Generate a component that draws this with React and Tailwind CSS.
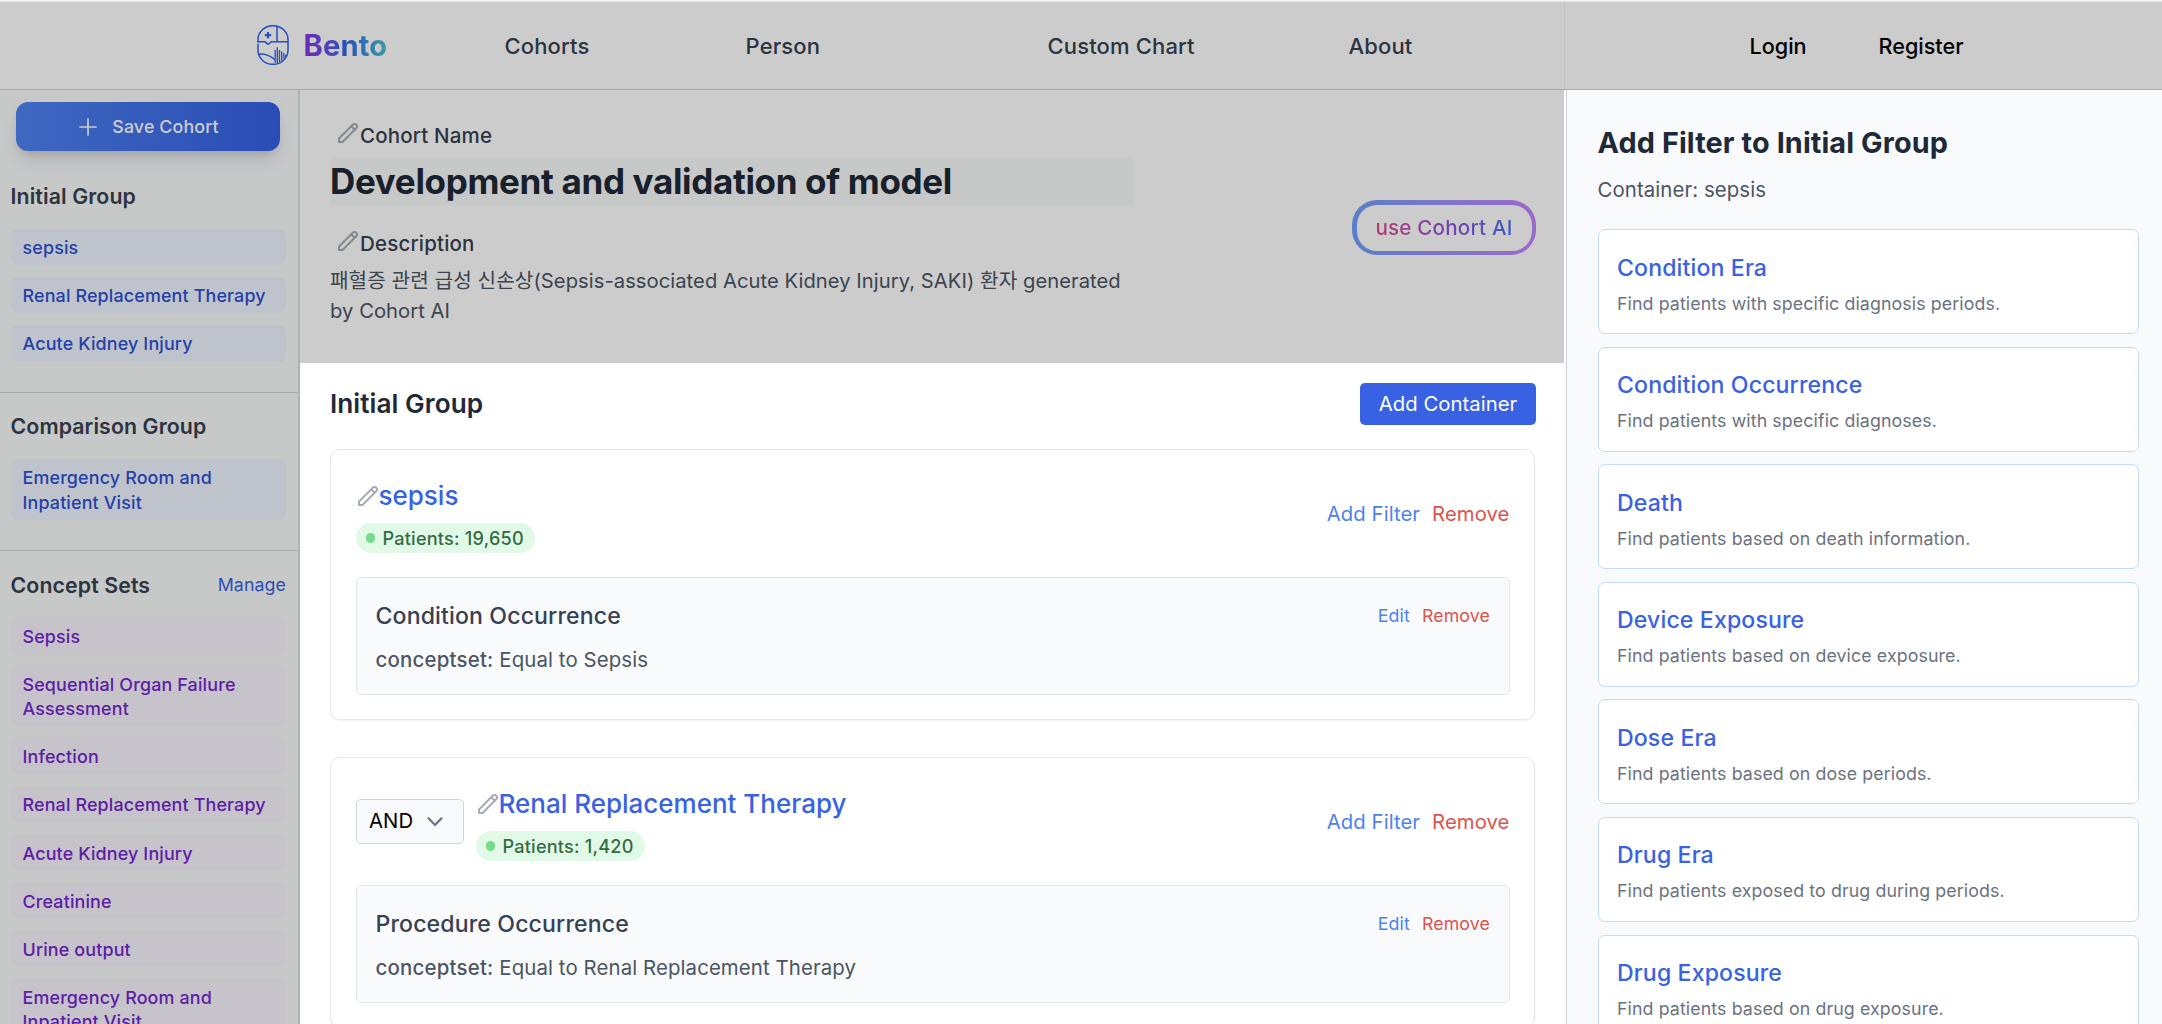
import React from "react";

const PencilIcon = ({ className = "" }) => (
  <svg viewBox="0 0 24 24" fill="none" stroke="currentColor" strokeWidth="1.9" strokeLinecap="round" strokeLinejoin="round" className={`h-6 w-6 shrink-0 text-[#a4a9b4] ${className}`}>
    <path d="M15.232 5.232l3.536 3.536m-2.036-5.036a2.5 2.5 0 113.536 3.536L6.5 21.036H3v-3.572L16.732 3.732z" />
  </svg>
);

const Logo = () => (
  <svg viewBox="0 0 96 120" fill="none" stroke="#3263f2" strokeWidth="4.5" className="h-10 w-8 shrink-0">
    <path d="M3 50V44a45 42 0 0 1 90 0V76a45 42 0 0 1-90 0V56" />
    <path d="M60 3V50M0 50.500H24L33 58L43 50.500H93" />
    <path d="M33 21V40M23.500 30.500H42.500" strokeWidth="6.500" />
    <path d="M4 88C22 85 36 90 54 104" />
    <path d="M54.500 74V113M61 67V114M67.500 75V111M74 79V107M80.500 84V101M86 89V95" strokeWidth="4" />
  </svg>
);

const SideHeading = ({ children }) => (
  <h3 className="text-[21.3px] leading-[30px] font-semibold tracking-[0.11px] text-[#374151]">{children}</h3>
);

const Chip = ({ children, tone }) => (
  <div
    className={`rounded-[7px] px-3 pt-[6.800px] pb-[5.200px] text-[17.9px] leading-[24.3px] font-medium tracking-[0.15px] ${
      tone === "blue" ? "bg-[#eff5ff] text-[#2d50d2]" : "bg-[#f9f4fe] text-[#7427ce]"
    }`}
  >
    {children}
  </div>
);

const FilterBox = ({ title, value }) => (
  <div className="mt-6 h-[117.500px] rounded-[5px] border border-[#e5e7eb] bg-[#f9fafc] pt-[19.6px] pr-[18.500px] pl-[19px]">
    <div className="flex h-9 items-center justify-between">
      <h4 className="text-[23.1px] leading-9 font-medium tracking-[0.13px] text-[#374151]">{title}</h4>
      <div className="flex gap-3 pt-px text-[17.8px] tracking-[0.1px]">
        <span className="text-[#4c82f0]">Edit</span>
        <span className="text-[#dd534d]">Remove</span>
      </div>
    </div>
    <p className="mt-[11.500px] text-[20.4px] leading-[30px] tracking-[0.1px] text-[#4b5563]">
      <span className="font-medium tracking-[0.22px]">conceptset:</span> {value}
    </p>
  </div>
);

const ContainerCard = ({ operator, name, patients, title, value }) => (
  <section className="mr-px h-[271px] rounded-[10px] border border-[#e5e7eb] bg-white px-[24.5px] pt-[24px] shadow-[0_1px_2px_rgba(0,0,0,0.06)]">
    <div className="flex items-center">
      {operator && (
        <div className="mr-3 flex h-[45px] w-[108px] items-center rounded-[5px] border border-[#d1d5db] bg-[#f9fafc] pl-[12.500px] text-[20.3px] tracking-[0.1px] text-black">
          <span>{operator}</span>
          <svg viewBox="0 0 16 10" fill="none" stroke="#6b7280" strokeWidth="2.200" strokeLinecap="round" strokeLinejoin="round" className="ml-[14px] h-[10px] w-4">
            <path d="M1.500 1.300L8 8L14.500 1.300" />
          </svg>
        </div>
      )}
      <div className="flex-1">
        <div className="mb-[6px] flex h-[43px] items-center">
          <PencilIcon />
          <h3 className="-ml-px text-[26px] leading-[43px] font-medium text-[#3862e3]">{name}</h3>
        </div>
        <div className="flex h-[30px] w-fit items-center gap-[7.500px] rounded-full bg-[#e1fae8] pr-[11px] pl-[10px]">
          <span className="h-[9.500px] w-[9.500px] rounded-full bg-[#74dc89]" />
          <span className="text-[18.1px] leading-[30px] font-medium tracking-[0.22px] text-[#356b40]">Patients: {patients}</span>
        </div>
      </div>
      <div className="flex gap-3 pt-[2px] text-[20.3px] tracking-[0.08px]">
        <span className="text-[#4c82f0]">Add Filter</span>
        <span className="text-[#dd534d]">Remove</span>
      </div>
    </div>
    <FilterBox title={title} value={value} />
  </section>
);

const FILTERS = [
  ["Condition Era", "Find patients with specific diagnosis periods."],
  ["Condition Occurrence", "Find patients with specific diagnoses."],
  ["Death", "Find patients based on death information."],
  ["Device Exposure", "Find patients based on device exposure."],
  ["Dose Era", "Find patients based on dose periods."],
  ["Drug Era", "Find patients exposed to drug during periods."],
  ["Drug Exposure", "Find patients based on drug exposure."],
];

const CONCEPT_SETS = [
  "Sepsis",
  "Sequential Organ Failure Assessment",
  "Infection",
  "Renal Replacement Therapy",
  "Acute Kidney Injury",
  "Creatinine",
  "Urine output",
  "Emergency Room and Inpatient Visit",
];

const Header = () => (
  <header className="relative flex h-[88px] shrink-0 border-b border-[#d1d5db] bg-white text-[22px] font-medium tracking-[0.15px] text-[#374151] after:absolute after:inset-x-0 after:top-0 after:-bottom-px after:bg-black/20">
    <div className="flex w-[1564px] items-center pt-px pl-[257px]">
      <div className="flex w-[247.500px] items-center">
        <div className="mb-[3px]">
          <Logo />
        </div>
        <span className="ml-[14.500px] bg-gradient-to-r from-[#8534e6] via-[#3563e9] to-[#4fc0cf] bg-clip-text text-[29.2px] leading-10 font-bold text-transparent">
          Bento
        </span>
      </div>
      <span className="w-[241px]">Cohorts</span>
      <span className="w-[302px]">Person</span>
      <span className="w-[301px]">Custom Chart</span>
      <span>About</span>
    </div>
    <div className="flex flex-1 items-center border-l border-[#f6f6f6] pt-px pl-[184.500px] text-[21.600px] tracking-[0px] text-black">
      <span className="w-[129px]">Login</span>
      <span>Register</span>
    </div>
  </header>
);

const Sidebar = () => (
  <aside className="relative w-[300px] shrink-0 overflow-hidden border-r-2 border-[#b0b2b6] bg-[#f9fafb] after:absolute after:inset-0 after:bg-black/20">
    <div className="pt-[12px] pr-3 pl-[10.500px]">
      <button className="mx-[5.500px] flex h-[48.500px] w-[264px] items-center justify-center rounded-[12px] bg-gradient-to-r from-[#4f83f2] to-[#3560e4] pt-[1.500px] pl-[2px] text-[17.8px] font-medium tracking-[0.15px] text-white shadow-[0_12px_18px_-4px_rgba(0,0,0,0.12),0_4px_7px_-2px_rgba(0,0,0,0.1)]">
        <svg viewBox="0 0 18 18" stroke="currentColor" strokeWidth="1.700" strokeLinecap="round" className="mr-[15px] h-[18px] w-[18px]">
          <path d="M9 1V17M1 9H17" />
        </svg>
        Save Cohort
      </button>
      <div className="mt-[30.500px] mb-[18px]">
        <SideHeading>Initial Group</SideHeading>
      </div>
      <div className="flex flex-col gap-[11.900px]">
        <Chip tone="blue">sepsis</Chip>
        <Chip tone="blue">Renal Replacement Therapy</Chip>
        <Chip tone="blue">Acute Kidney Injury</Chip>
      </div>
    </div>
    <div className="mt-[30px] border-t border-[#d1d5db] pt-[18.800px] pr-3 pl-[10.500px]">
      <div className="mb-[18px]">
        <SideHeading>Comparison Group</SideHeading>
      </div>
      <Chip tone="blue">Emergency Room and Inpatient Visit</Chip>
    </div>
    <div className="mt-[30.300px] border-t border-[#d1d5db] pt-[18.500px] pr-3 pl-[10.500px]">
      <div className="mb-[18px] flex items-center justify-between">
        <SideHeading>Concept Sets</SideHeading>
        <span className="text-[17.8px] leading-[30px] tracking-[0.08px] text-[#3862e3]">Manage</span>
      </div>
      <div className="flex flex-col gap-[11.900px]">
        {CONCEPT_SETS.map((name) => (
          <Chip key={name} tone="purple">{name}</Chip>
        ))}
      </div>
    </div>
  </aside>
);

const FieldLabel = ({ children }) => (
  <div className="flex h-[30px] items-center pl-[6px]">
    <PencilIcon className="mb-[6px]" />
    <span className="text-[20.5px] leading-[30px] font-medium tracking-[0.18px] text-[#374151]">{children}</span>
  </div>
);

const CohortInfo = () => (
  <section className="relative flex h-[273px] items-center justify-between bg-white pr-7 pl-[30px] after:absolute after:inset-0 after:bg-black/20">
    <div className="w-[804px] self-start pt-[31px]">
      <FieldLabel>Cohort Name</FieldLabel>
      <h1 className="mt-[6px] h-12 rounded-[5px] bg-[#f9fafb] text-[35px] leading-12 font-bold tracking-[-0.33px] text-[#1f2937]">
        Development and validation of model
      </h1>
      <div className="mt-6">
        <FieldLabel>Description</FieldLabel>
      </div>
      <p className="mt-[7px] text-[20.2px] leading-[30px] tracking-[0.05px] text-[#4b5563]">
        패혈증 관련 급성 신손상(Sepsis-associated Acute Kidney Injury, SAKI) 환자 generated by Cohort AI
      </p>
    </div>
    <div className="mt-[2px] rounded-[25px] bg-gradient-to-r from-[#729ffa] to-[#c084fc] p-[4.500px]">
      <div className="flex h-[46px] w-[175px] items-center justify-center rounded-[20px] bg-white">
        <span className="bg-gradient-to-r from-[#e6478c] via-[#9350d8] to-[#4672f0] bg-clip-text text-[20.6px] leading-[30px] font-medium tracking-[0.2px] text-transparent">
          use Cohort AI
        </span>
      </div>
    </div>
  </section>
);

const FilterPanel = () => (
  <aside className="flex flex-1 border-l border-[#d1d5db] bg-[#f9fafc]">
    <div className="w-full pt-[34px] pr-[23.500px] pl-[30.500px]">
      <h2 className="text-[28.800px] leading-[37px] font-bold tracking-[0.11px] text-[#1f2937]">Add Filter to Initial Group</h2>
      <p className="mt-[14px] text-[20.4px] leading-[30px] tracking-[0.08px] text-[#4b5563]">Container: sepsis</p>
      <div className="mt-[24px] flex flex-col gap-[12.600px]">
        {FILTERS.map(([title, text]) => (
          <div key={title} className="h-[105px] rounded-[7px] border border-[#c3dafd] bg-white pt-[19.500px] pl-[18.500px]">
            <h4 className="text-[23.1px] leading-9 font-medium tracking-[0.13px] text-[#3862e3]">{title}</h4>
            <p className="mt-[6px] text-[17.8px] leading-6 tracking-[0.1px] text-[#6b7280]">{text}</p>
          </div>
        ))}
      </div>
    </div>
  </aside>
);

export default function App() {
  return (
    <div className="flex h-[1024px] w-[2162px] flex-col overflow-hidden bg-white font-['Inter','Noto_Sans_CJK_KR',sans-serif]">
      <div className="h-[2px] shrink-0 border-b border-[#e0e0e0] bg-[#f6f6f6]" />
      <Header />
      <div className="flex min-h-0 flex-1">
        <Sidebar />
        <main className="w-[1264px] shrink-0">
          <CohortInfo />
          <div className="pt-[19.500px] pr-7 pl-[30px]">
            <div className="mb-6 flex items-center justify-between">
              <h2 className="text-[26.2px] leading-[42px] font-semibold tracking-[0.05px] text-[#1f2937]">Initial Group</h2>
              <button className="h-[42.500px] w-[176px] rounded-[5px] bg-[#3862e3] text-[20.3px] tracking-[0.03px] text-white">Add Container</button>
            </div>
            <div className="flex flex-col gap-[37px]">
              <ContainerCard name="sepsis" patients="19,650" title="Condition Occurrence" value="Equal to Sepsis" />
              <ContainerCard operator="AND" name="Renal Replacement Therapy" patients="1,420" title="Procedure Occurrence" value="Equal to Renal Replacement Therapy" />
            </div>
          </div>
        </main>
        <div className="w-[2px] shrink-0 bg-white" />
        <FilterPanel />
      </div>
    </div>
  );
}
